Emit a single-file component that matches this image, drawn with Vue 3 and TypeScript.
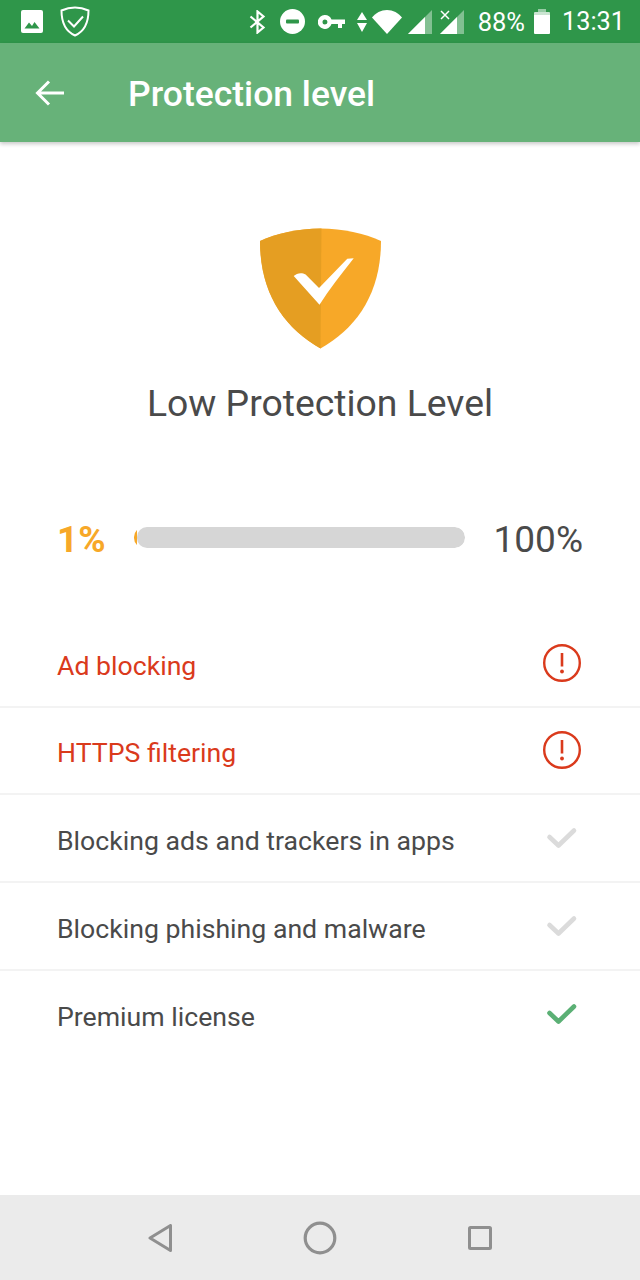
<template>
  <div class="screen">
    <!-- Android status bar -->
    <div class="status-bar">
      <div class="status-left">
        <svg width="22" height="23" viewBox="0 0 22 23">
          <path d="M2 0h18a2 2 0 0 1 2 2v19a2 2 0 0 1-2 2H2a2 2 0 0 1-2-2V2a2 2 0 0 1 2-2z" fill="#fff" />
          <path d="M3.500 18.500l4.500-6 3 3.500 2.500-4 5 6.500z" fill="#2f964a" />
        </svg>
        <svg class="ic-guard" width="30" height="31" viewBox="0 0 30 31">
          <path d="M15 1.500C10 1.500 5.500 2.700 1.500 4.500C1.500 16 6 25.500 15 29.500C24 25.500 28.500 16 28.500 4.500C24.500 2.700 20 1.500 15 1.500z" fill="none" stroke="#fff" stroke-width="2" />
          <path d="M8 14.500l6 6 9-10" fill="none" stroke="#fff" stroke-width="2" />
        </svg>
      </div>
      <div class="status-right">
        <svg class="ic-bt" width="17" height="24" viewBox="0 0 17 24">
          <path d="M1.500 6.500l13 11-6 5V1.500l6 5-13 11" fill="none" stroke="#fff" stroke-width="2.200" />
        </svg>
        <svg class="ic-dnd" width="25" height="25" viewBox="0 0 25 25">
          <circle cx="12.500" cy="12.500" r="12.500" fill="#fff" />
          <rect x="6" y="10.500" width="13" height="4" rx="1" fill="#2f964a" />
        </svg>
        <svg class="ic-key" width="27" height="14" viewBox="0 0 27 14">
          <path d="M7 0a7 7 0 0 1 6.500 4.500H27V9h-3v4h-4V9h-6.500A7 7 0 1 1 7 0zM7 4.500a2.500 2.500 0 1 0 0 5 2.500 2.500 0 0 0 0-5z" fill="#fff" fill-rule="evenodd" />
        </svg>
        <svg class="ic-updown" width="10" height="20" viewBox="0 0 10 20">
          <path d="M5 0l5 8H0zM5 20l5-9H0z" fill="#fff" />
        </svg>
        <svg class="ic-wifi" width="30" height="24" viewBox="0 0 30 24">
          <path d="M0 7.500C3.500 3 9 0 15 0s11.500 3 15 7.500L15 24z" fill="#fff" />
        </svg>
        <svg class="ic-signal" width="24" height="24" viewBox="0 0 24 24">
          <path d="M24 0v24H0z" fill="#fff" fill-opacity="0.4" />
          <path d="M17 7v17H0z" fill="#fff" />
        </svg>
        <svg class="ic-signal-x" width="24" height="24" viewBox="0 0 24 24">
          <path d="M24 0v24H0z" fill="#fff" fill-opacity="0.4" />
          <path d="M17 7v17H0z" fill="#fff" />
          <path d="M1 1l8 8M9 1l-8 8" stroke="#fff" stroke-width="1.500" />
        </svg>
        <span class="battery-pct">88%</span>
        <div class="battery" />
        <span class="clock">13:31</span>
      </div>
    </div>

    <!-- Toolbar -->
    <header class="toolbar">
      <svg width="30" height="30" viewBox="0 0 30 30">
        <path d="M29 15H3M14 3.500L2.500 15 14 26.500" fill="none" stroke="#fff" stroke-width="3" />
      </svg>
      <h1>Protection level</h1>
    </header>

    <main class="content">
      <svg class="shield" width="121" height="121" viewBox="0 0 122 121">
        <path d="M61 0C84 0 105 5 122 12.500C122 65 98 100 61 121C24 100 0 65 0 12.500C17 5 38 0 61 0z" fill="#f7a828" />
        <path d="M62 0C38 0 17 5 0 12.500C0 65 24 100 61 121z" fill="#e59e22" />
        <path d="M34 48C37 45 42 44 46 46.500L59.500 60L88 30.500L94.500 30C82 46 70 61 60 77z" fill="#fff" />
      </svg>
      <h2>Low Protection Level</h2>

      <div class="progress-row">
        <span class="pct-low">1%</span>
        <div class="bar-track">
          <div class="bar-tip" :style="{ width: level + '%' }" />
          <div class="bar-rest" />
        </div>
        <span class="pct-full">100%</span>
      </div>

      <ul class="checks">
        <li v-for="item in items" :key="item.label" :class="item.state">
          <span>{{ item.label }}</span>
          <svg v-if="item.state === 'warn'" class="ic" width="40" height="40" viewBox="0 0 40 40">
            <circle cx="20" cy="20" r="17.800" fill="none" stroke="#da3a1c" stroke-width="2.400" />
            <path d="M20 10v13.500" stroke="#da3a1c" stroke-width="2.600" />
            <circle cx="20" cy="28.500" r="1.900" fill="#da3a1c" />
          </svg>
          <svg v-else class="ic" width="40" height="40" viewBox="0 0 40 40">
            <path d="M7.500 19l9 8.500L32 12.500" fill="none" stroke-width="4.600" stroke-linecap="round" stroke-linejoin="round" :stroke="item.state === 'ok' ? '#5bb075' : '#dbdbdb'" />
          </svg>
        </li>
      </ul>
    </main>

    <!-- Android navigation bar -->
    <nav class="nav-bar">
      <svg width="24" height="28" viewBox="0 0 24 28">
        <path d="M2 14L22.500 1.500v25z" fill="none" stroke="#8f8f8f" stroke-width="3" stroke-linejoin="round" />
      </svg>
      <svg width="34" height="34" viewBox="0 0 34 34">
        <circle cx="17" cy="17" r="14.800" fill="none" stroke="#8f8f8f" stroke-width="3.200" />
      </svg>
      <svg width="24" height="24" viewBox="0 0 24 24">
        <rect x="1.500" y="1.500" width="21" height="21" rx="1" fill="none" stroke="#8f8f8f" stroke-width="3" />
      </svg>
    </nav>
  </div>
</template>

<script setup lang="ts">
interface CheckItem {
  label: string
  state: 'warn' | 'off' | 'ok'
}

const level = 1

const items: CheckItem[] = [
  { label: 'Ad blocking', state: 'warn' },
  { label: 'HTTPS filtering', state: 'warn' },
  { label: 'Blocking ads and trackers in apps', state: 'off' },
  { label: 'Blocking phishing and malware', state: 'off' },
  { label: 'Premium license', state: 'ok' },
]
</script>

<style>
html,
body {
  margin: 0;
  background: #fff;
}
</style>

<style scoped>
.screen {
  width: 640px;
  height: 1280px;
  display: flex;
  flex-direction: column;
  overflow: hidden;
  font-family: Roboto, sans-serif;
  background: #fff;
}

.status-bar {
  height: 43px;
  flex: none;
  display: flex;
  align-items: center;
  justify-content: space-between;
  background: #2f964a;
  color: #fff;
  padding: 0 15px 0 21px;
}

.status-left,
.status-right {
  display: flex;
  align-items: center;
}

.ic-guard {
  margin-left: 17px;
}

.ic-bt {
  margin-right: 14px;
}

.ic-key {
  margin-left: 13px;
}

.ic-updown {
  margin-left: 12px;
}

.ic-wifi {
  margin-left: 5px;
}

.ic-signal {
  margin-left: 6px;
}

.ic-signal-x {
  margin-left: 8px;
}

.battery-pct {
  margin-left: 14px;
  font-size: 25.500px;
}

.battery {
  margin: 3px 0 0 9px;
  width: 16px;
  height: 22px;
  position: relative;
  background: linear-gradient(rgba(255, 255, 255, 0.75) 3px, #fff 3px);
  border-radius: 1px;
}

.battery::before {
  content: "";
  position: absolute;
  top: -3px;
  left: 4px;
  width: 8px;
  height: 3px;
  background: rgba(255, 255, 255, 0.5);
}

.clock {
  margin-left: 12px;
  font-size: 25.300px;
}

.toolbar {
  height: 99px;
  flex: none;
  display: flex;
  align-items: center;
  gap: 63px;
  padding-left: 35px;
  background: #67b279;
  box-shadow: 0 2px 4px rgba(0, 0, 0, 0.22);
  position: relative;
}

.toolbar h1 {
  margin: 2px 0 0;
  font-size: 35.500px;
  font-weight: 500;
  color: #fff;
}

.content {
  flex: 1;
  display: flex;
  flex-direction: column;
  align-items: center;
  padding-top: 86px;
}

.shield {
  display: block;
}

.content h2 {
  margin: 31px 0 0;
  font-size: 37.330px;
  line-height: 46px;
  font-weight: 400;
  color: #4a4a4a;
}

.progress-row {
  align-self: stretch;
  display: flex;
  align-items: center;
  margin-top: 88px;
  padding: 0 57px;
  height: 50px;
}

.pct-low {
  width: 77px;
  font-size: 37px;
  font-weight: 700;
  color: #f7a828;
}

.bar-track {
  width: 331px;
  height: 21px;
  margin-top: -4px;
  display: flex;
  border-radius: 10px;
  overflow: hidden;
}

.bar-tip {
  background: #f7a828;
  border-radius: 10px 0 0 10px;
}

.bar-rest {
  flex: 1;
  background: #d6d6d6;
  border-radius: 10px;
}

.pct-full {
  margin-left: auto;
  font-size: 37px;
  color: #4a4a4a;
}

.checks {
  align-self: stretch;
  list-style: none;
  margin: 56px 0 0;
  padding: 0;
}

.checks li {
  height: 87.670px;
  box-sizing: border-box;
  display: flex;
  align-items: center;
  justify-content: space-between;
  padding: 6px 58px 0 57px;
  font-size: 26.670px;
  color: #4a4a4a;
  border-bottom: 2px solid #f3f3f3;
}

.checks li:last-child {
  border-bottom: 0;
}

.checks li.warn {
  color: #da3a1c;
}

.checks .ic {
  margin-top: -6px;
  flex: none;
}

.nav-bar {
  margin-top: auto;
  height: 85px;
  flex: none;
  display: flex;
  align-items: center;
  justify-content: space-between;
  padding: 0 148px;
  background: #ebebeb;
}
</style>
